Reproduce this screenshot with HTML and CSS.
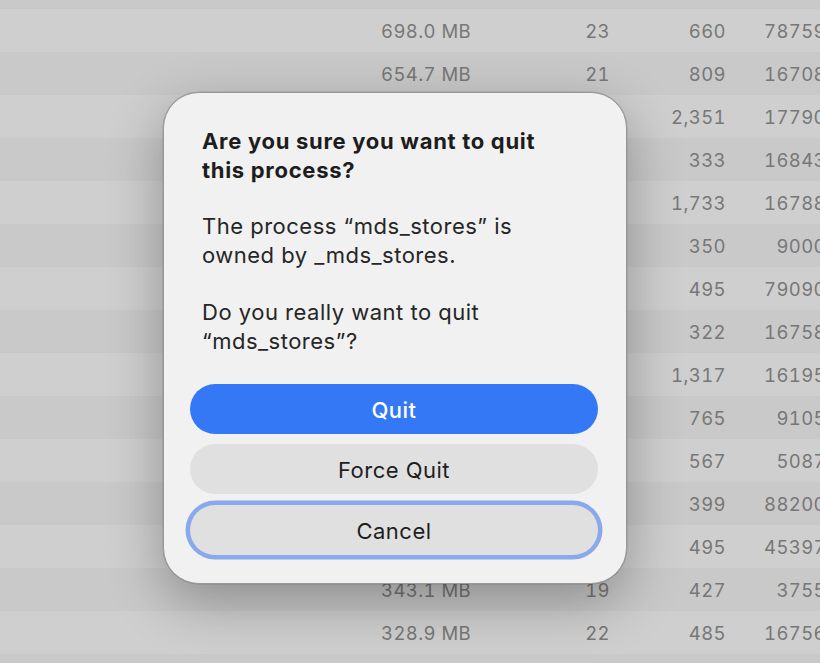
FILE: index.html
```html
<!DOCTYPE html>
<html lang="en">
<head>
<meta charset="utf-8">
<title>Quit process</title>
<link rel="stylesheet" href="styles.css">
</head>
<body>
<div class="table">
  <div class="row"><span>698.0 MB</span><span>23</span><span>660</span><span>78759</span></div>
  <div class="row"><span>654.7 MB</span><span>21</span><span>809</span><span>16708</span></div>
  <div class="row"><span>612.4 MB</span><span>20</span><span>2,351</span><span>17790</span></div>
  <div class="row"><span>598.2 MB</span><span>18</span><span>333</span><span>16843</span></div>
  <div class="row"><span>540.9 MB</span><span>24</span><span>1,733</span><span>16788</span></div>
  <div class="row"><span>512.6 MB</span><span>17</span><span>350</span><span>9000</span></div>
  <div class="row"><span>488.3 MB</span><span>21</span><span>495</span><span>79090</span></div>
  <div class="row"><span>460.0 MB</span><span>19</span><span>322</span><span>16758</span></div>
  <div class="row"><span>431.7 MB</span><span>25</span><span>1,317</span><span>16195</span></div>
  <div class="row"><span>410.2 MB</span><span>16</span><span>765</span><span>9105</span></div>
  <div class="row"><span>395.8 MB</span><span>20</span><span>567</span><span>5087</span></div>
  <div class="row"><span>377.5 MB</span><span>18</span><span>399</span><span>88200</span></div>
  <div class="row"><span>360.4 MB</span><span>21</span><span>495</span><span>45397</span></div>
  <div class="row"><span>343.1 MB</span><span>19</span><span>427</span><span>3755</span></div>
  <div class="row"><span>328.9 MB</span><span>22</span><span>485</span><span>16756</span></div>
</div>

<div class="dialog" role="alertdialog">
  <h1 class="title">Are you sure you want to quit<br>this process?</h1>
  <p class="msg">The process “mds_stores” is<br>owned by _mds_stores.</p>
  <p class="msg">Do you really want to quit<br>“mds_stores”?</p>
  <div class="buttons">
    <button class="btn btn-primary">Quit</button>
    <button class="btn">Force Quit</button>
    <button class="btn btn-focus">Cancel</button>
  </div>
</div>
</body>
</html>
```

FILE: styles.css
```css
* { box-sizing: border-box; }

html, body {
  margin: 0;
  padding: 0;
  width: 820px;
  height: 663px;
  overflow: hidden;
}

body {
  background: #c9c9c9;
  font-family: Inter, "Noto Sans", "Liberation Sans", sans-serif;
  position: relative;
}

.table {
  padding-top: 9px;
  display: flex;
  flex-direction: column;
  width: 830px;
}

.row {
  display: grid;
  grid-template-columns: 471px 139px 116px 100px;
  height: 43px;
  align-items: center;
  font-size: 18.5px;
  letter-spacing: 0.4px;
  color: #777777;
  font-variant-numeric: tabular-nums;
  background: #cfcfcf;
}

.row:nth-child(even) { background: #c9c9c9; }

.row span { text-align: right; white-space: nowrap; }

.dialog {
  position: absolute;
  left: 163px;
  top: 92px;
  width: 464px;
  height: 492px;
  background: #f1f1f1;
  border: 1px solid #989898;
  border-radius: 36px;
  padding: 34px 28px 28px 26px;
  box-shadow: 0 18px 55px rgba(0, 0, 0, 0.3), 0 0 0 0.5px rgba(0,0,0,0.15);
  display: flex;
  flex-direction: column;
}

.title {
  margin: 0 0 27px 12px;
  font-size: 22px;
  line-height: 29px;
  letter-spacing: 0.7px;
  font-weight: 700;
  color: #1d1d1d;
}

.msg {
  margin: 0 0 28px 12px;
  font-size: 22px;
  line-height: 29px;
  letter-spacing: 0.5px;
  font-weight: 400;
  color: #262626;
}

.buttons {
  display: flex;
  flex-direction: column;
  gap: 10px;
  margin-top: auto;
}

.btn {
  height: 50px;
  border: none;
  border-radius: 25px;
  background: #e0e0e0;
  color: #1e1e1e;
  font-family: inherit;
  font-size: 22px;
  letter-spacing: 0.5px;
  font-weight: 400;
  padding: 2px 0 0;
}

.btn-primary {
  background: #3478f6;
  color: #ffffff;
  font-weight: 500;
}

.btn-focus {
  margin-top: 1px;
  box-shadow: 0 0 0 4.5px #8aa8ec;
}
```
